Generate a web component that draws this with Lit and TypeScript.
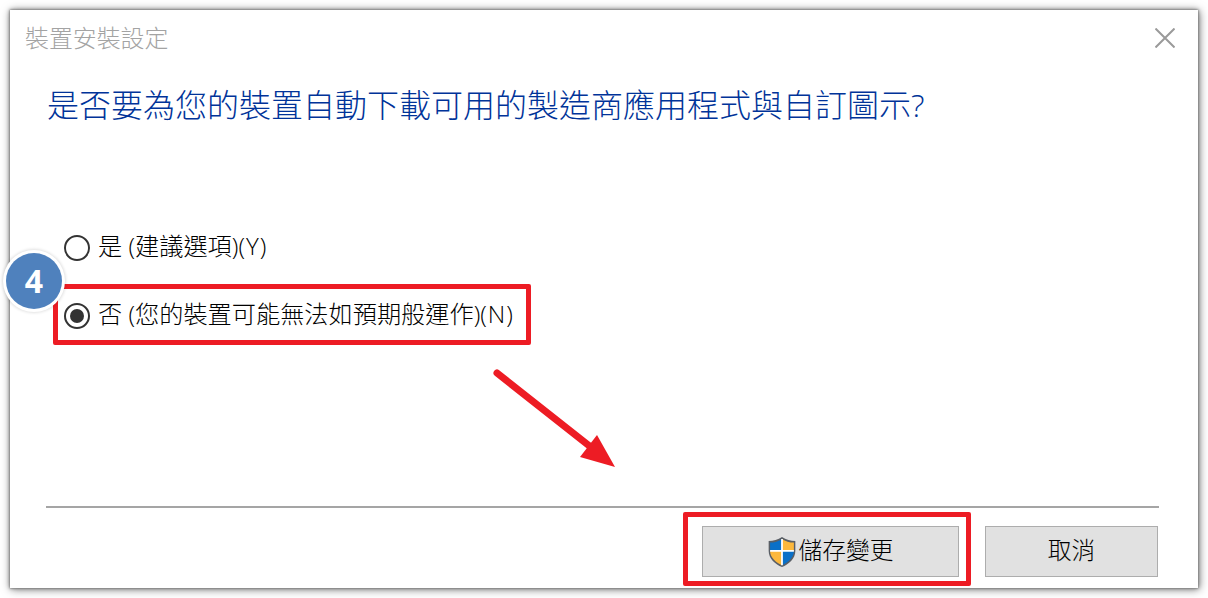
import { LitElement, html, css, svg } from 'lit';
import { customElement } from 'lit/decorators.js';

const OPTIONS = [
  { label: '是 (建議選項)', key: '(Y)', checked: false },
  { label: '否 (您的裝置可能無法如預期般運作)', key: '(N)', checked: true },
];

const shield = svg`
  <path d="M14 1.500 C10.500 4 6 5 2 5 V14 C2 21 8 26 14 28.500 C20 26 26 21 26 14 V5 C22 5 17.500 4 14 1.500Z" fill="#5a5f66"/>
  <path d="M14 3.200 C11 5.300 7 6.400 3.300 6.500 V14 H14Z" fill="#0a70c8"/>
  <path d="M14 3.200 C17 5.300 21 6.400 24.700 6.500 V14 H14Z" fill="#fcb83c"/>
  <path d="M3.300 14 C3.300 20 9 24.800 14 26.900 V14Z" fill="#fcb83c"/>
  <path d="M24.700 14 C24.700 20 19 24.800 14 26.900 V14Z" fill="#0a70c8"/>
  <path d="M14 3.200 V26.900 M3.300 14 H24.700" stroke="#fff" stroke-width="1.600" fill="none"/>
`;

@customElement('app-root')
export class AppRoot extends LitElement {
  static styles = css`
    :host {
      display: block;
      width: 1208px;
      height: 598px;
      padding: 10px;
      box-sizing: border-box;
      background: #fff;
      position: relative;
      overflow: hidden;
      font-family: 'Open Sans', 'Noto Sans CJK TC', sans-serif;
      color: #000;
    }
    .dialog {
      height: 578px;
      width: 1188px;
      background: #fff;
      box-shadow: 0 0 2px #666, 0 0 4px #888, 1px 1px 9px rgba(0, 0, 0, 0.55);
      display: flex;
      flex-direction: column;
      box-sizing: border-box;
    }
    .titlebar {
      height: 57px;
      display: flex;
      align-items: center;
      justify-content: space-between;
      padding: 0 23px 0 15px;
      flex: none;
    }
    .title {
      font-size: 23.9px;
      line-height: 32px;
      color: #a3a3a3;
      font-weight: 300;
      margin-top: -1px;
    }
    .close {
      width: 20px;
      height: 20px;
      display: block;
      margin-top: -2px;
    }
    .heading {
      margin: -2px 0 0;
      padding: 0 0 0 37px;
      height: 80px;
      font-size: 32px;
      line-height: 80px;
      font-weight: 300;
      color: #003399;
      white-space: nowrap;
    }
    .options {
      display: flex;
      flex-direction: column;
      gap: 36px;
      padding: 87px 0 0 54px;
      flex: none;
    }
    .option {
      display: flex;
      align-items: center;
      gap: 9px;
      height: 32px;
      font-size: 24.2px;
      font-weight: 300;
      white-space: nowrap;
    }
    .option .text {
      line-height: 32px;
      margin-top: -5px;
      margin-left: -1px;
    }
    .option .key {
      letter-spacing: 1px;
    }
    .radio {
      width: 26px;
      height: 26px;
      box-sizing: border-box;
      border: 2px solid #333;
      border-radius: 50%;
      display: flex;
      align-items: center;
      justify-content: center;
      flex: none;
    }
    .radio.checked::after {
      content: '';
      width: 14px;
      height: 14px;
      border-radius: 50%;
      background: #333;
    }
    .spacer {
      flex: 1;
    }
    .divider {
      height: 2px;
      background: #a5a5a5;
      margin: 0 39px 0 36px;
      flex: none;
    }
    .footer {
      display: flex;
      justify-content: flex-end;
      gap: 26px;
      padding: 18px 40px 11px 0;
      flex: none;
    }
    .btn {
      height: 51px;
      box-sizing: border-box;
      background: #e1e1e1;
      border: 1px solid #adadad;
      display: flex;
      align-items: center;
      justify-content: center;
      gap: 3px;
      font-size: 23.7px;
      line-height: 32px;
      font-weight: 300;
      color: #000;
      font-family: inherit;
      padding: 0;
    }
    .btn .label {
      margin-top: -4px;
    }
    .btn.save {
      width: 257px;
    }
    .btn.cancel {
      width: 173px;
    }
    .btn svg {
      width: 28px;
      height: 30px;
    }
    .mark {
      position: absolute;
      box-sizing: border-box;
      border: 5px solid #ed1c24;
      border-radius: 2px;
    }
    .mark.one {
      left: 53px;
      top: 284px;
      width: 478px;
      height: 61px;
    }
    .mark.two {
      left: 683px;
      top: 512px;
      width: 288px;
      height: 74px;
    }
    .badge {
      position: absolute;
      left: 6px;
      top: 253px;
      width: 56px;
      height: 56px;
      border-radius: 50%;
      background: #4f81bd;
      box-shadow: 0 0 0 3px #fff, 0 0 3px 4px rgba(0, 0, 0, 0.12);
      color: #fff;
      display: flex;
      align-items: center;
      justify-content: center;
      font-size: 32px;
      line-height: 1;
      font-weight: 700;
    }
    .arrow {
      position: absolute;
      left: 480px;
      top: 360px;
      width: 150px;
      height: 115px;
    }
  `;

  render() {
    return html`
      <div class="dialog">
        <div class="titlebar">
          <span class="title">裝置安裝設定</span>
          <svg class="close" viewBox="0 0 20 20">
            <path d="M0.500 0.500 L19.500 19.500 M19.500 0.500 L0.500 19.500" stroke="#9a9a9a" stroke-width="2" fill="none"/>
          </svg>
        </div>
        <h1 class="heading">是否要為您的裝置自動下載可用的製造商應用程式與自訂圖示?</h1>
        <div class="options">
          ${OPTIONS.map(o => html`
            <div class="option">
              <span class="radio ${o.checked ? 'checked' : ''}"></span>
              <span class="text">${o.label}<span class="key">${o.key}</span></span>
            </div>
          `)}
        </div>
        <div class="spacer"></div>
        <div class="divider"></div>
        <div class="footer">
          <button class="btn save">
            <svg viewBox="2 1.500 24 27">${shield}</svg>
            <span class="label">儲存變更</span>
          </button>
          <button class="btn cancel"><span class="label">取消</span></button>
        </div>
      </div>
      <div class="mark one"></div>
      <div class="mark two"></div>
      <div class="badge">4</div>
      <svg class="arrow" viewBox="0 0 150 115">
        <path d="M17 13 L112 88" stroke="#ed1c24" stroke-width="7" stroke-linecap="round" fill="none"/>
        <path d="M117 75 L135 107 L100 97Z" fill="#ed1c24"/>
      </svg>
    `;
  }
}
